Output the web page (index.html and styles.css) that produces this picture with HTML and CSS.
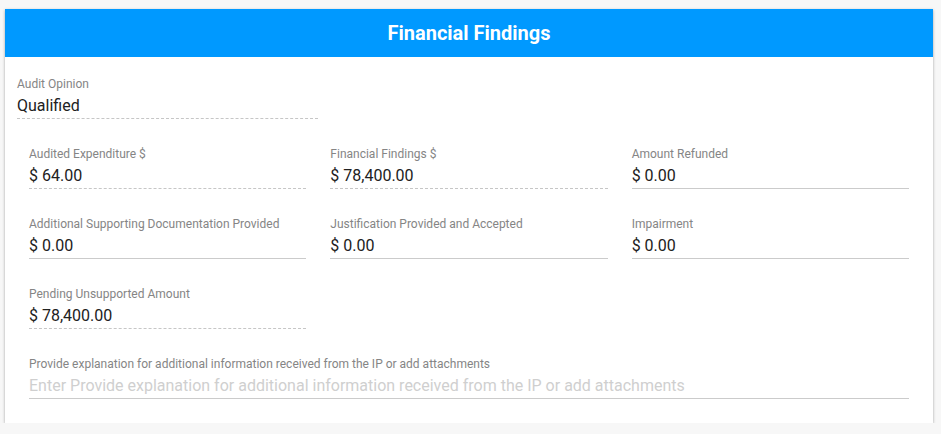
FILE: index.html
```html
<!DOCTYPE html>
<html>
<head>
<meta charset="utf-8">
<link rel="stylesheet" href="styles.css">
</head>
<body>
<div class="card">
  <div class="card-header">Financial Findings</div>
  <div class="card-body">
    <div class="opinion">
      <div class="field readonly">
        <div class="label">Audit Opinion</div>
        <div class="value">Qualified</div>
      </div>
    </div>
    <div class="grid">
      <div class="field readonly">
        <div class="label">Audited Expenditure $</div>
        <div class="value">$ 64.00</div>
      </div>
      <div class="field readonly">
        <div class="label">Financial Findings $</div>
        <div class="value">$ 78,400.00</div>
      </div>
      <div class="field">
        <div class="label">Amount Refunded</div>
        <div class="value">$ 0.00</div>
      </div>
      <div class="field">
        <div class="label">Additional Supporting Documentation Provided</div>
        <div class="value">$ 0.00</div>
      </div>
      <div class="field">
        <div class="label">Justification Provided and Accepted</div>
        <div class="value">$ 0.00</div>
      </div>
      <div class="field">
        <div class="label">Impairment</div>
        <div class="value">$ 0.00</div>
      </div>
      <div class="field readonly">
        <div class="label">Pending Unsupported Amount</div>
        <div class="value">$ 78,400.00</div>
      </div>
      <div class="field wide">
        <div class="label">Provide explanation for additional information received from the IP or add attachments</div>
        <div class="value placeholder">Enter Provide explanation for additional information received from the IP or add attachments</div>
      </div>
    </div>
  </div>
</div>
</body>
</html>
```

FILE: styles.css
```css
html, body {
  margin: 0;
  padding: 0;
}
body {
  background: #f7f7f7;
  font-family: Roboto, "Liberation Sans", sans-serif;
  padding: 9px 8px 0 5px;
  width: 928px;
}
.card {
  background: #fff;
  width: 928px;
  box-shadow: 0 1px 3px rgba(0,0,0,0.28), 0 1px 1px rgba(0,0,0,0.12);
}
.card-header {
  background: #0099ff;
  color: #fff;
  height: 48px;
  display: flex;
  align-items: center;
  justify-content: center;
  font-size: 20px;
  font-weight: 700;
}
.card-body {
  padding: 19px 24px 24px 12px;
}
.opinion {
  width: 301px;
}
.grid {
  margin-top: 27px;
  padding-left: 12px;
  display: grid;
  grid-template-columns: repeat(3, 1fr);
  column-gap: 24px;
  row-gap: 27px;
}
.field {
  border-bottom: 1px solid #cbcbcb;
  padding-bottom: 2px;
}
.field.readonly {
  border-bottom: 1px dashed #c6c6c6;
}
.field.wide {
  grid-column: 1 / -1;
}
.label {
  font-size: 12px;
  line-height: 16px;
  color: #858585;
}
.value {
  margin-top: 4px;
  font-size: 16px;
  line-height: 20px;
  color: #212121;
}
.value.placeholder {
  color: #cfcfcf;
}
```
